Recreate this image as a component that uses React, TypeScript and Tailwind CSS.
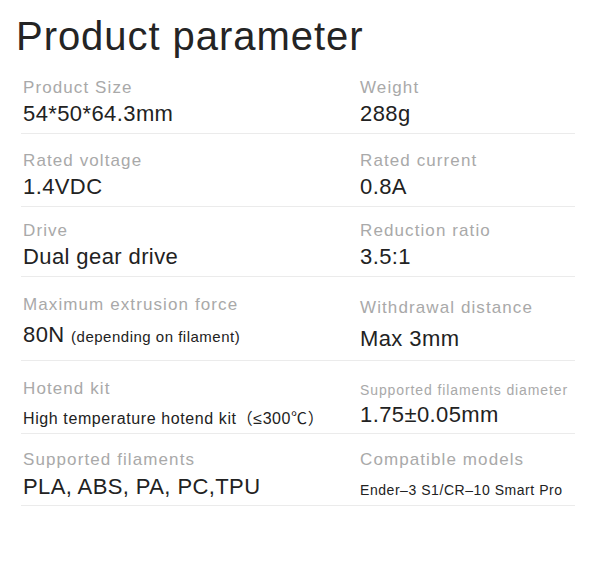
import React from "react";

const font = { fontFamily: '"Liberation Sans", "Noto Sans CJK SC", Arial, sans-serif' };

function Label({ children, small = false }: { children: React.ReactNode; small?: boolean }) {
  return small ? (
    <div className="text-[14px] leading-[20px] tracking-[0.9px] text-[#a9a9a9] whitespace-nowrap">{children}</div>
  ) : (
    <div className="text-[17px] leading-[20px] tracking-[1.1px] text-[#a9a9a9] whitespace-nowrap">{children}</div>
  );
}

function Value({ children, className = "" }: { children: React.ReactNode; className?: string }) {
  return (
    <div className={`text-[22px] leading-[26px] tracking-[0.4px] text-[#222222] whitespace-nowrap ${className}`}>
      {children}
    </div>
  );
}

export default function App() {
  return (
    <div className="w-[603px] h-[569px] bg-white overflow-hidden" style={font}>
      <h1 className="pl-[16px] pt-[16px] mb-[4px] text-[40px] leading-[40px] tracking-[0.95px] text-[#242424] font-normal">
        Product parameter
      </h1>
      <div className="ml-[21px] w-[554px]">
        {/* Row 1 */}
        <div className="grid grid-cols-[337px_1fr] pl-[2px] pt-[18px] pb-[6px] border-b border-[#ebebeb]">
          <div>
            <Label>Product Size</Label>
            <Value className="mt-[3px]">54*50*64.3mm</Value>
          </div>
          <div>
            <Label>Weight</Label>
            <Value className="mt-[3px]">288g</Value>
          </div>
        </div>
        {/* Row 2 */}
        <div className="grid grid-cols-[337px_1fr] pl-[2px] pt-[17px] pb-[6px] border-b border-[#ebebeb]">
          <div>
            <Label>Rated voltage</Label>
            <Value className="mt-[3px]">1.4VDC</Value>
          </div>
          <div>
            <Label>Rated current</Label>
            <Value className="mt-[3px]">0.8A</Value>
          </div>
        </div>
        {/* Row 3 */}
        <div className="grid grid-cols-[337px_1fr] pl-[2px] pt-[14px] pb-[6px] border-b border-[#ebebeb]">
          <div>
            <Label>Drive</Label>
            <Value className="mt-[3px]">Dual gear drive</Value>
          </div>
          <div>
            <Label>Reduction ratio</Label>
            <Value className="mt-[3px]">3.5:1</Value>
          </div>
        </div>
        {/* Row 4 */}
        <div className="grid grid-cols-[337px_1fr] items-start pl-[2px] pt-[18px] pb-[8px] border-b border-[#ebebeb]">
          <div>
            <Label>Maximum extrusion force</Label>
            <Value className="mt-[7px]">
              80N{" "}
              <span className="text-[15px] tracking-[0.5px]">(depending on filament)</span>
            </Value>
          </div>
          <div className="pt-[3px]">
            <Label>Withdrawal distance</Label>
            <Value className="mt-[8px]">Max 3mm</Value>
          </div>
        </div>
        {/* Row 5 */}
        <div className="grid grid-cols-[337px_1fr] items-start pl-[2px] pt-[18px] pb-[4px] border-b border-[#ebebeb]">
          <div>
            <Label>Hotend kit</Label>
            <div className="mt-[10px] text-[16px] leading-[20px] tracking-[0.6px] text-[#222222] whitespace-nowrap">
              High temperature hotend kit（≤300℃）
            </div>
          </div>
          <div className="pt-[1px]">
            <Label small>Supported filaments diameter</Label>
            <Value className="mt-[2px]">1.75±0.05mm</Value>
          </div>
        </div>
        {/* Row 6 */}
        <div className="grid grid-cols-[337px_1fr] items-start pl-[2px] pt-[16px] pb-[5px] border-b border-[#ebebeb]">
          <div>
            <Label>Supported filaments</Label>
            <Value className="mt-[4px]">PLA, ABS, PA, PC,TPU</Value>
          </div>
          <div>
            <Label>Compatible models</Label>
            <div className="mt-[10px] text-[14px] leading-[20px] tracking-[0.55px] text-[#222222] whitespace-nowrap">
              Ender–3 S1/CR–10 Smart Pro
            </div>
          </div>
        </div>
      </div>
    </div>
  );
}
